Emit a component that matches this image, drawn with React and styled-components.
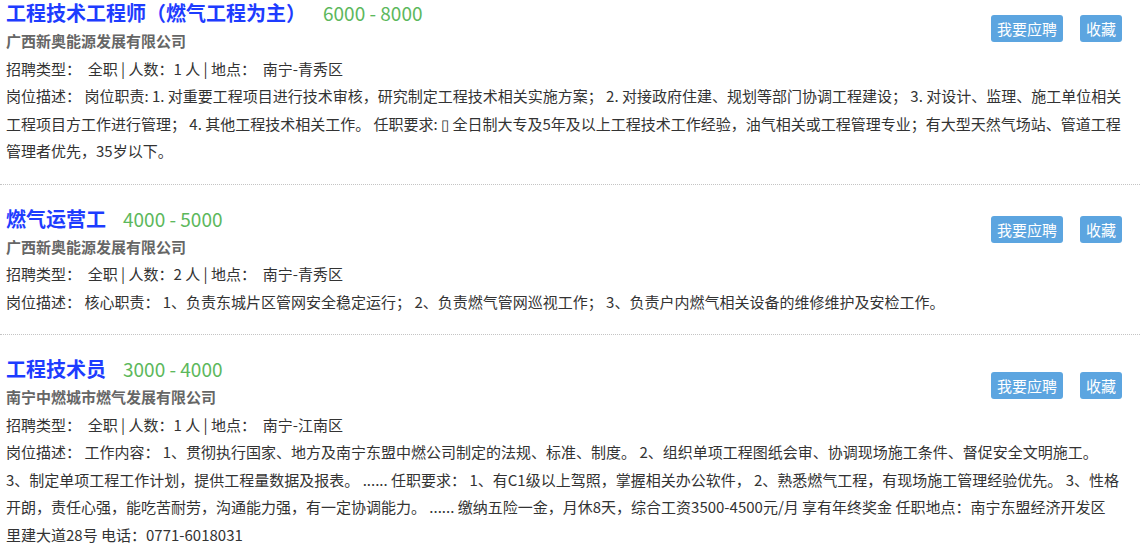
import React from "react";
import styled, { createGlobalStyle } from "styled-components";

const GlobalStyle = createGlobalStyle`
  html, body {
    margin: 0;
    padding: 0;
    background: #fff;
    overflow: hidden;
  }
  body {
    font-family: "Microsoft YaHei", "Noto Sans CJK SC", "Noto Sans", sans-serif;
    color: #333;
  }
`;

const jobs = [
  {
    title: "工程技术工程师（燃气工程为主）",
    salary: "6000 - 8000",
    company: "广西新奥能源发展有限公司",
    count: 1,
    place: "南宁-青秀区",
    btnTop: 17,
    desc: [
      "岗位职责: 1. 对重要工程项目进行技术审核，研究制定工程技术相关实施方案； 2. 对接政府住建、规划等部门协调工程建设； 3. 对设计、监理、施工单位相关工程项目方工作进行管理； 4. 其他工程技术相关工作。 任职要求: \u25AF 全日制大专及5年及以上工程技术工作经验，油气相关或工程管理专业；有大型天然气场站、管道工程管理者优先，35岁以下。",
    ],
  },
  {
    title: "燃气运营工",
    salary: "4000 - 5000",
    company: "广西新奥能源发展有限公司",
    count: 2,
    place: "南宁-青秀区",
    btnTop: 12,
    desc: [
      "核心职责： 1、负责东城片区管网安全稳定运行； 2、负责燃气管网巡视工作； 3、负责户内燃气相关设备的维修维护及安检工作。",
    ],
  },
  {
    title: "工程技术员",
    salary: "3000 - 4000",
    company: "南宁中燃城市燃气发展有限公司",
    count: 1,
    place: "南宁-江南区",
    btnTop: 18,
    desc: [
      "工作内容： 1、贯彻执行国家、地方及南宁东盟中燃公司制定的法规、标准、制度。 2、组织单项工程图纸会审、协调现场施工条件、督促安全文明施工。",
      "3、制定单项工程工作计划，提供工程量数据及报表。 ...... 任职要求： 1、有C1级以上驾照，掌握相关办公软件， 2、熟悉燃气工程，有现场施工管理经验优先。 3、性格开朗，责任心强，能吃苦耐劳，沟通能力强，有一定协调能力。 ...... 缴纳五险一金，月休8天，综合工资3500-4500元/月 享有年终奖金 任职地点：南宁东盟经济开发区",
      "里建大道28号 电话：0771-6018031",
    ],
  },
];

function JobItem({ job }) {
  return (
    <Item>
      <Head>
        <div>
          <TitleLine>
            <Title>{job.title}</Title>
            <Salary>{job.salary}</Salary>
          </TitleLine>
          <Company>{job.company}</Company>
        </div>
        <Actions $top={job.btnTop}>
          <Button>我要应聘</Button>
          <Button>收藏</Button>
        </Actions>
      </Head>
      <Line>
        招聘类型：&nbsp; 全职 | 人数：{job.count} 人 | 地点：&nbsp; {job.place}
      </Line>
      <Line>
        岗位描述：&nbsp;
        {job.desc.map((d, i) => (
          <React.Fragment key={i}>
            {i > 0 && <br />}
            {d}
          </React.Fragment>
        ))}
      </Line>
    </Item>
  );
}

export default function App() {
  return (
    <>
      <GlobalStyle />
      <List>
        {jobs.map((job, i) => (
          <JobItem key={i} job={job} />
        ))}
      </List>
    </>
  );
}

const List = styled.div`
  width: 1140px;
  margin-top: -21px;
`;

const Item = styled.div`
  padding: 19px 12px 19px 6px;
  border-bottom: 1px dotted #c4c4c4;
`;

const Head = styled.div`
  display: flex;
  justify-content: space-between;
  align-items: flex-start;
`;

const TitleLine = styled.div`
  display: flex;
  align-items: baseline;
  height: 29px;
  line-height: 29px;
`;

const Title = styled.span`
  font-size: 20px;
  font-weight: bold;
  color: #1e3cff;
`;

const Salary = styled.span`
  margin-left: 17px;
  font-size: 19px;
  color: #5cb85c;
`;

const Company = styled.div`
  font-size: 15px;
  font-weight: bold;
  line-height: 27.5px;
  color: #666;
`;

const Actions = styled.div`
  display: flex;
  gap: 17px;
  margin-top: ${(p) => p.$top}px;
  margin-right: 6px;
`;

const Button = styled.button`
  height: 27px;
  padding: 0 6px;
  border: none;
  border-radius: 3px;
  background: #5ca5e0;
  color: #fff;
  font-family: inherit;
  font-size: 15px;
  line-height: 27px;
  cursor: pointer;
`;

const Line = styled.div`
  font-size: 15px;
  line-height: 27.5px;
  color: #333;
`;
